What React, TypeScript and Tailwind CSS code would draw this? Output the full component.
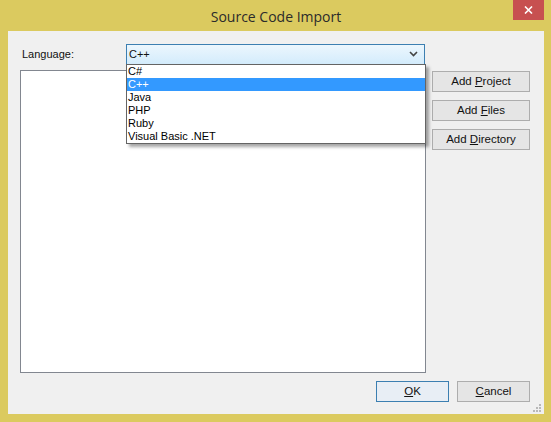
import React from "react";

const ui = { fontFamily: '"Liberation Sans", Arial, sans-serif' };

function Btn({ children, w, focus }: { children: React.ReactNode; w: string; focus?: boolean }) {
  return (
    <div
      className={`${w} h-[21px] flex items-center justify-center text-[11.5px] text-[#111] border ${
        focus ? "border-[#3c7fb1] bg-[#e8eef5]" : "border-[#adadad] bg-[#e5e5e5]"
      }`}
    >
      <span>{children}</span>
    </div>
  );
}

export default function App() {
  const items = ["C#", "C++", "Java", "PHP", "Ruby", "Visual Basic .NET"];
  return (
    <div className="w-[551px] h-[422px] bg-[#dbca5f] flex flex-col pl-[8px] pr-[7px] pb-[8px]" style={ui}>
      <div className="h-[31px] flex items-start relative">
        <div
          className="flex-1 text-center pt-[6px] text-[14px] text-[#2b2b2b]"
          style={{ fontFamily: '"Open Sans", "Noto Sans", sans-serif' }}
        >
          Source Code Import
        </div>
        <div className="absolute right-[0px] top-0 w-[31px] h-[20px] bg-[#c75050] flex items-center justify-center">
          <svg width="9" height="8" viewBox="0 0 9 8">
            <path d="M1 0.5 L8 7.5 M8 0.5 L1 7.5" stroke="#fff" strokeWidth="1.6" />
          </svg>
        </div>
      </div>
      <div className="flex-1 bg-[#f0f0f0] relative flex flex-col pl-[12px] pt-[13px]">
        <div className="flex items-center h-[20px]">
          <div className="w-[106px] pl-[2px] text-[11px] text-[#111]">Language:</div>
          <div className="w-[299px] h-[21px] border border-[#3c7fb1] bg-gradient-to-b from-[#ecf6fd] to-[#d3ecfc] flex items-center pl-[2px] pr-[6px] text-[11px] text-[#111]">
            <span className="flex-1">C++</span>
            <svg width="9" height="6" viewBox="0 0 9 6">
              <path d="M1 1 L4.5 4.5 L8 1" stroke="#444" strokeWidth="1.6" fill="none" />
            </svg>
          </div>
        </div>
        <div className="flex mt-[6px]">
          <div className="w-[406px] h-[303px] bg-white border border-[#828790]" />
          <div className="flex flex-col gap-[8px] ml-[6px] mt-[1px]">
            <Btn w="w-[98px]">
              Add <u>P</u>roject
            </Btn>
            <Btn w="w-[98px]">
              Add <u>F</u>iles
            </Btn>
            <Btn w="w-[98px]">
              Add <u>D</u>irectory
            </Btn>
          </div>
        </div>
        <div className="flex justify-end gap-[8px] mt-[8px] pr-[14px]">
          <Btn w="w-[73px]" focus>
            <u>O</u>K
          </Btn>
          <Btn w="w-[73px]">
            <u>C</u>ancel
          </Btn>
        </div>
        <div className="absolute right-[3px] bottom-[2px]">
          <svg width="9" height="9" viewBox="0 0 9 9">
            {[
              [7, 1],
              [4, 4],
              [7, 4],
              [1, 7],
              [4, 7],
              [7, 7],
            ].map(([x, y], i) => (
              <rect key={i} x={x} y={y} width="2" height="2" fill="#b8b8b8" />
            ))}
          </svg>
        </div>
        <div className="absolute left-[118px] top-[33px] w-[300px] bg-white border border-[#646464] shadow-[3px_3px_3px_rgba(0,0,0,0.35)] flex flex-col text-[11px] leading-[13px] text-black">
          {items.map((it) => (
            <div key={it} className={`h-[13px] pl-[1px] ${it === "C++" ? "bg-[#3399ff] text-white" : ""}`}>
              {it}
            </div>
          ))}
        </div>
      </div>
    </div>
  );
}
